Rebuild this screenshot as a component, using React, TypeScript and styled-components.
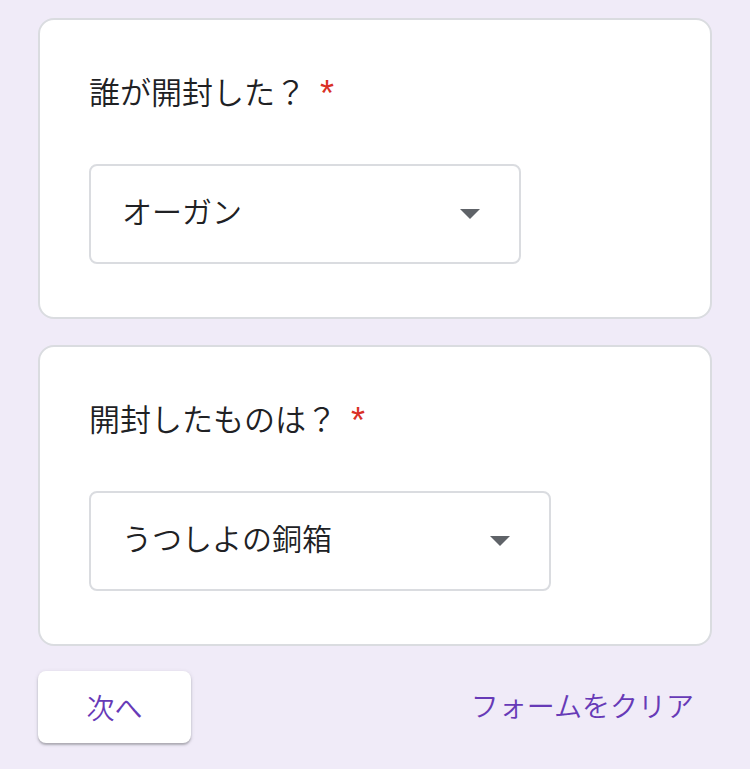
import React from "react";
import styled, { createGlobalStyle } from "styled-components";

const Global = createGlobalStyle`
  html, body {
    margin: 0;
    padding: 0;
    background: #f0ebf8;
  }
  body {
    font-family: Roboto, "Noto Sans CJK JP", sans-serif;
    color: #202124;
  }
`;

const Page = styled.div`
  width: 750px;
  min-height: 769px;
  box-sizing: border-box;
  padding: 18px 38px 0;
  display: flex;
  flex-direction: column;
  gap: 26px;
`;

const Card = styled.section`
  background: #ffffff;
  border: 2px solid #dadce0;
  border-radius: 16px;
  padding: 48px 48px 53px 49px;
  display: flex;
  flex-direction: column;
  gap: 50px;
`;

const Title = styled.div`
  font-family: "Noto Sans CJK JP", sans-serif;
  font-weight: 350;
  font-size: 31px;
  line-height: 46px;
  height: 46px;
  color: #202124;
  white-space: nowrap;
`;

const Required = styled.span`
  font-family: "Liberation Sans", Arial, sans-serif;
  font-weight: 400;
  font-size: 36px;
  line-height: 0;
  color: #d93025;
  margin-left: 14px;
  vertical-align: -2px;
`;

const Select = styled.div<{ $width: number }>`
  width: ${(p) => p.$width}px;
  height: 100px;
  box-sizing: border-box;
  border: 2px solid #dadce0;
  border-radius: 8px;
  padding: 0 39px 0 31px;
  display: flex;
  align-items: center;
  justify-content: space-between;
`;

const SelectText = styled.span`
  font-family: "Noto Sans CJK JP", sans-serif;
  font-weight: 350;
  font-size: 30px;
  color: #202124;
  margin-bottom: 9px;
`;

const Arrow = styled.span`
  width: 0;
  height: 0;
  border-left: 10px solid transparent;
  border-right: 10px solid transparent;
  border-top: 10px solid #5f6368;
`;

const Footer = styled.div`
  display: flex;
  align-items: center;
  justify-content: space-between;
  margin-top: -1px;
  padding-right: 18px;
`;

const NextButton = styled.button`
  width: 153px;
  height: 72px;
  border: none;
  border-radius: 8px;
  background: #ffffff;
  box-shadow: 0 2px 2px rgba(60, 64, 67, 0.3), 0 1px 4px rgba(60, 64, 67, 0.15);
  font-family: "Noto Sans CJK JP", sans-serif;
  font-weight: 350;
  font-size: 28px;
  color: #673ab7;
  display: flex;
  align-items: center;
  justify-content: center;
  padding: 0;
`;

const ClearButton = styled.button`
  border: none;
  background: transparent;
  font-family: "Noto Sans CJK JP", sans-serif;
  font-weight: 350;
  font-size: 28px;
  color: #673ab7;
  padding: 0;
  margin-top: -4px;
`;

export default function App() {
  return (
    <>
      <Global />
      <Page>
        <Card>
          <Title>
            誰が開封した？<Required>*</Required>
          </Title>
          <Select $width={432}>
            <SelectText>オーガン</SelectText>
            <Arrow />
          </Select>
        </Card>
        <Card>
          <Title>
            開封したものは？<Required>*</Required>
          </Title>
          <Select $width={462}>
            <SelectText>うつしよの銅箱</SelectText>
            <Arrow />
          </Select>
        </Card>
        <Footer>
          <NextButton>次へ</NextButton>
          <ClearButton>フォームをクリア</ClearButton>
        </Footer>
      </Page>
    </>
  );
}
